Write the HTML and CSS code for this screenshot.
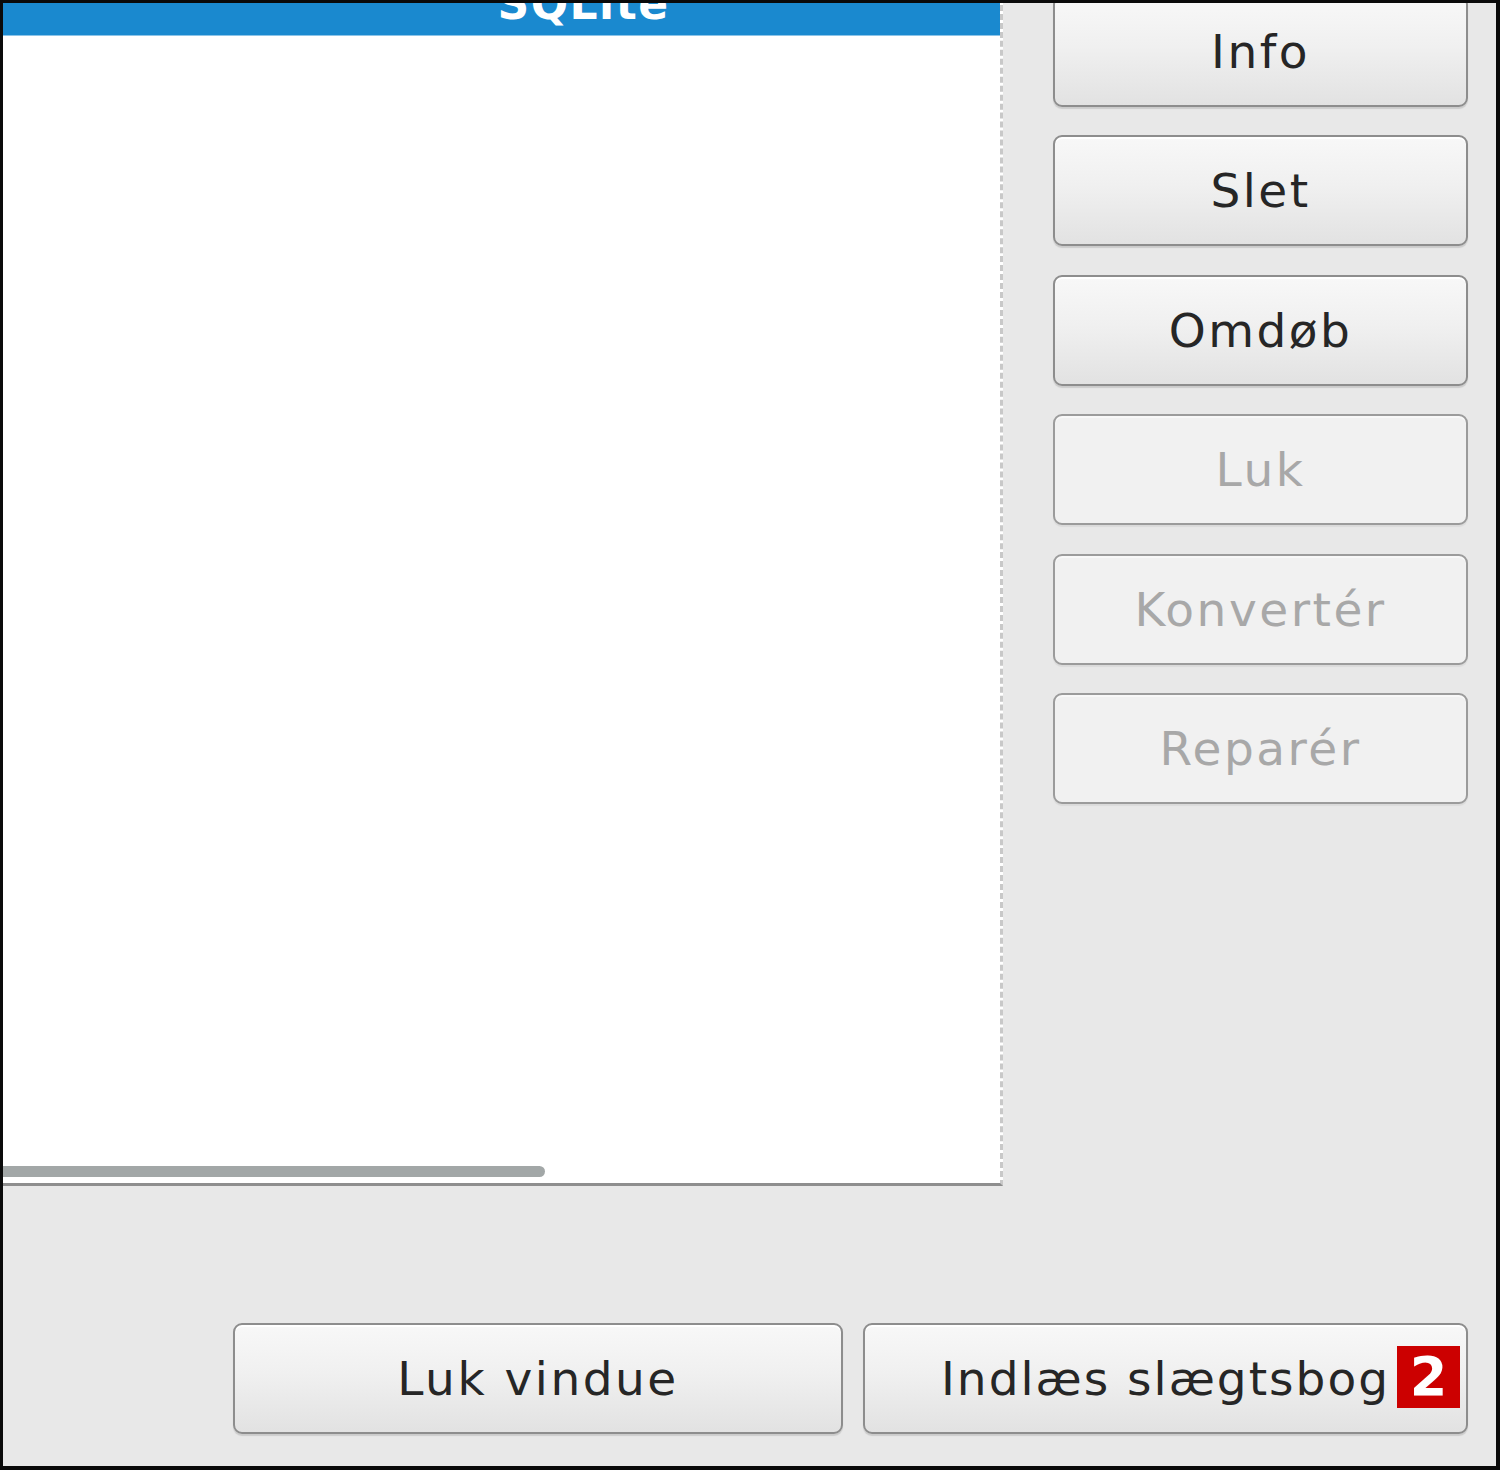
FILE: index.html
```html
<!DOCTYPE html>
<html lang="da">
<head>
<meta charset="utf-8">
<title>Slægtsbøger</title>
<link rel="stylesheet" href="styles.css">
</head>
<body>
<div class="frame">
  <div class="dialog">
    <div class="top">
      <div class="list">
        <div class="list-head"><span class="head-text">SQLite</span></div>
        <div class="list-body"></div>
        <div class="hscroll"><div class="thumb"></div></div>
      </div>
      <div class="side">
        <button class="btn">Info</button>
        <button class="btn">Slet</button>
        <button class="btn">Omdøb</button>
        <button class="btn" disabled>Luk</button>
        <button class="btn" disabled>Konvertér</button>
        <button class="btn" disabled>Reparér</button>
      </div>
    </div>
    <div class="actions">
      <button class="btn btn-close">Luk vindue</button>
      <button class="btn btn-load">Indlæs slægtsbog<span class="badge">2</span></button>
    </div>
  </div>
</div>
</body>
</html>
```
FILE: styles.css
```css
html, body {
  margin: 0;
  padding: 0;
  background: #000;
}
.frame {
  width: 1500px;
  height: 1470px;
  box-sizing: border-box;
  border-style: solid;
  border-color: #0a0a0a;
  border-width: 3px 4px 4px 3px;
  overflow: hidden;
}
.dialog {
  width: 100%;
  height: 100%;
  background: #e8e8e8;
  display: flex;
  flex-direction: column;
  font-family: "DejaVu Sans", Verdana, sans-serif;
}
.top {
  display: flex;
  margin-top: -7px;
  height: 1190px;
  flex-shrink: 0;
}
.list {
  width: 1000px;
  box-sizing: border-box;
  background: #fff;
  border-right: 3px dashed #c8c8c8;
  border-bottom: 3px solid #8e8e8e;
  display: flex;
  flex-direction: column;
}
.list-head {
  height: 39px;
  flex-shrink: 0;
  background: #1a89cf;
  border-bottom: 1px solid #8cc4e8;
  overflow: hidden;
  display: flex;
  justify-content: center;
  padding-left: 164px;
}
.head-text {
  color: #fff;
  font-size: 44px;
  font-weight: 600;
  letter-spacing: 1.5px;
  line-height: 44px;
  margin-top: -14px;
}
.list-body {
  flex: 1;
}
.hscroll {
  height: 11px;
  margin-bottom: 6px;
  flex-shrink: 0;
}
.thumb {
  width: 542px;
  height: 11px;
  background: #a2a7a7;
  border-radius: 0 6px 6px 0;
}
.side {
  margin-left: 50px;
  width: 415px;
  display: flex;
  flex-direction: column;
  gap: 28.4px;
}
.btn {
  position: relative;
  height: 111px;
  box-sizing: border-box;
  border: 2px solid #8d8d8d;
  border-radius: 9px;
  background: linear-gradient(#f8f8f8, #f0f0f0 45%, #e2e2e2);
  box-shadow: inset 0 2px 0 #ffffff, 0 2px 1px rgba(0, 0, 0, 0.12);
  color: #262626;
  font-family: "DejaVu Sans", Verdana, sans-serif;
  font-size: 47px;
  letter-spacing: 2.5px;
  padding: 0;
  text-align: center;
  flex-shrink: 0;
}
.btn:disabled {
  background: #f1f1f1;
  border-color: #9b9b9b;
  color: #a8a8a8;
  box-shadow: inset 0 2px 0 #f8f8f8, 0 2px 1px rgba(0, 0, 0, 0.06);
}
.actions {
  display: flex;
  justify-content: flex-end;
  gap: 20px;
  margin-top: 137px;
  padding-right: 28px;
}
.btn-close {
  width: 610px;
}
.btn-load {
  width: 605px;
  letter-spacing: 2px;
}
.badge {
  position: absolute;
  right: 6px;
  top: 21px;
  width: 63px;
  height: 62px;
  background: #cc0000;
  color: #fff;
  font-family: "DejaVu Sans", sans-serif;
  font-weight: bold;
  font-size: 54px;
  line-height: 62px;
  letter-spacing: 0;
  text-align: center;
}
```
